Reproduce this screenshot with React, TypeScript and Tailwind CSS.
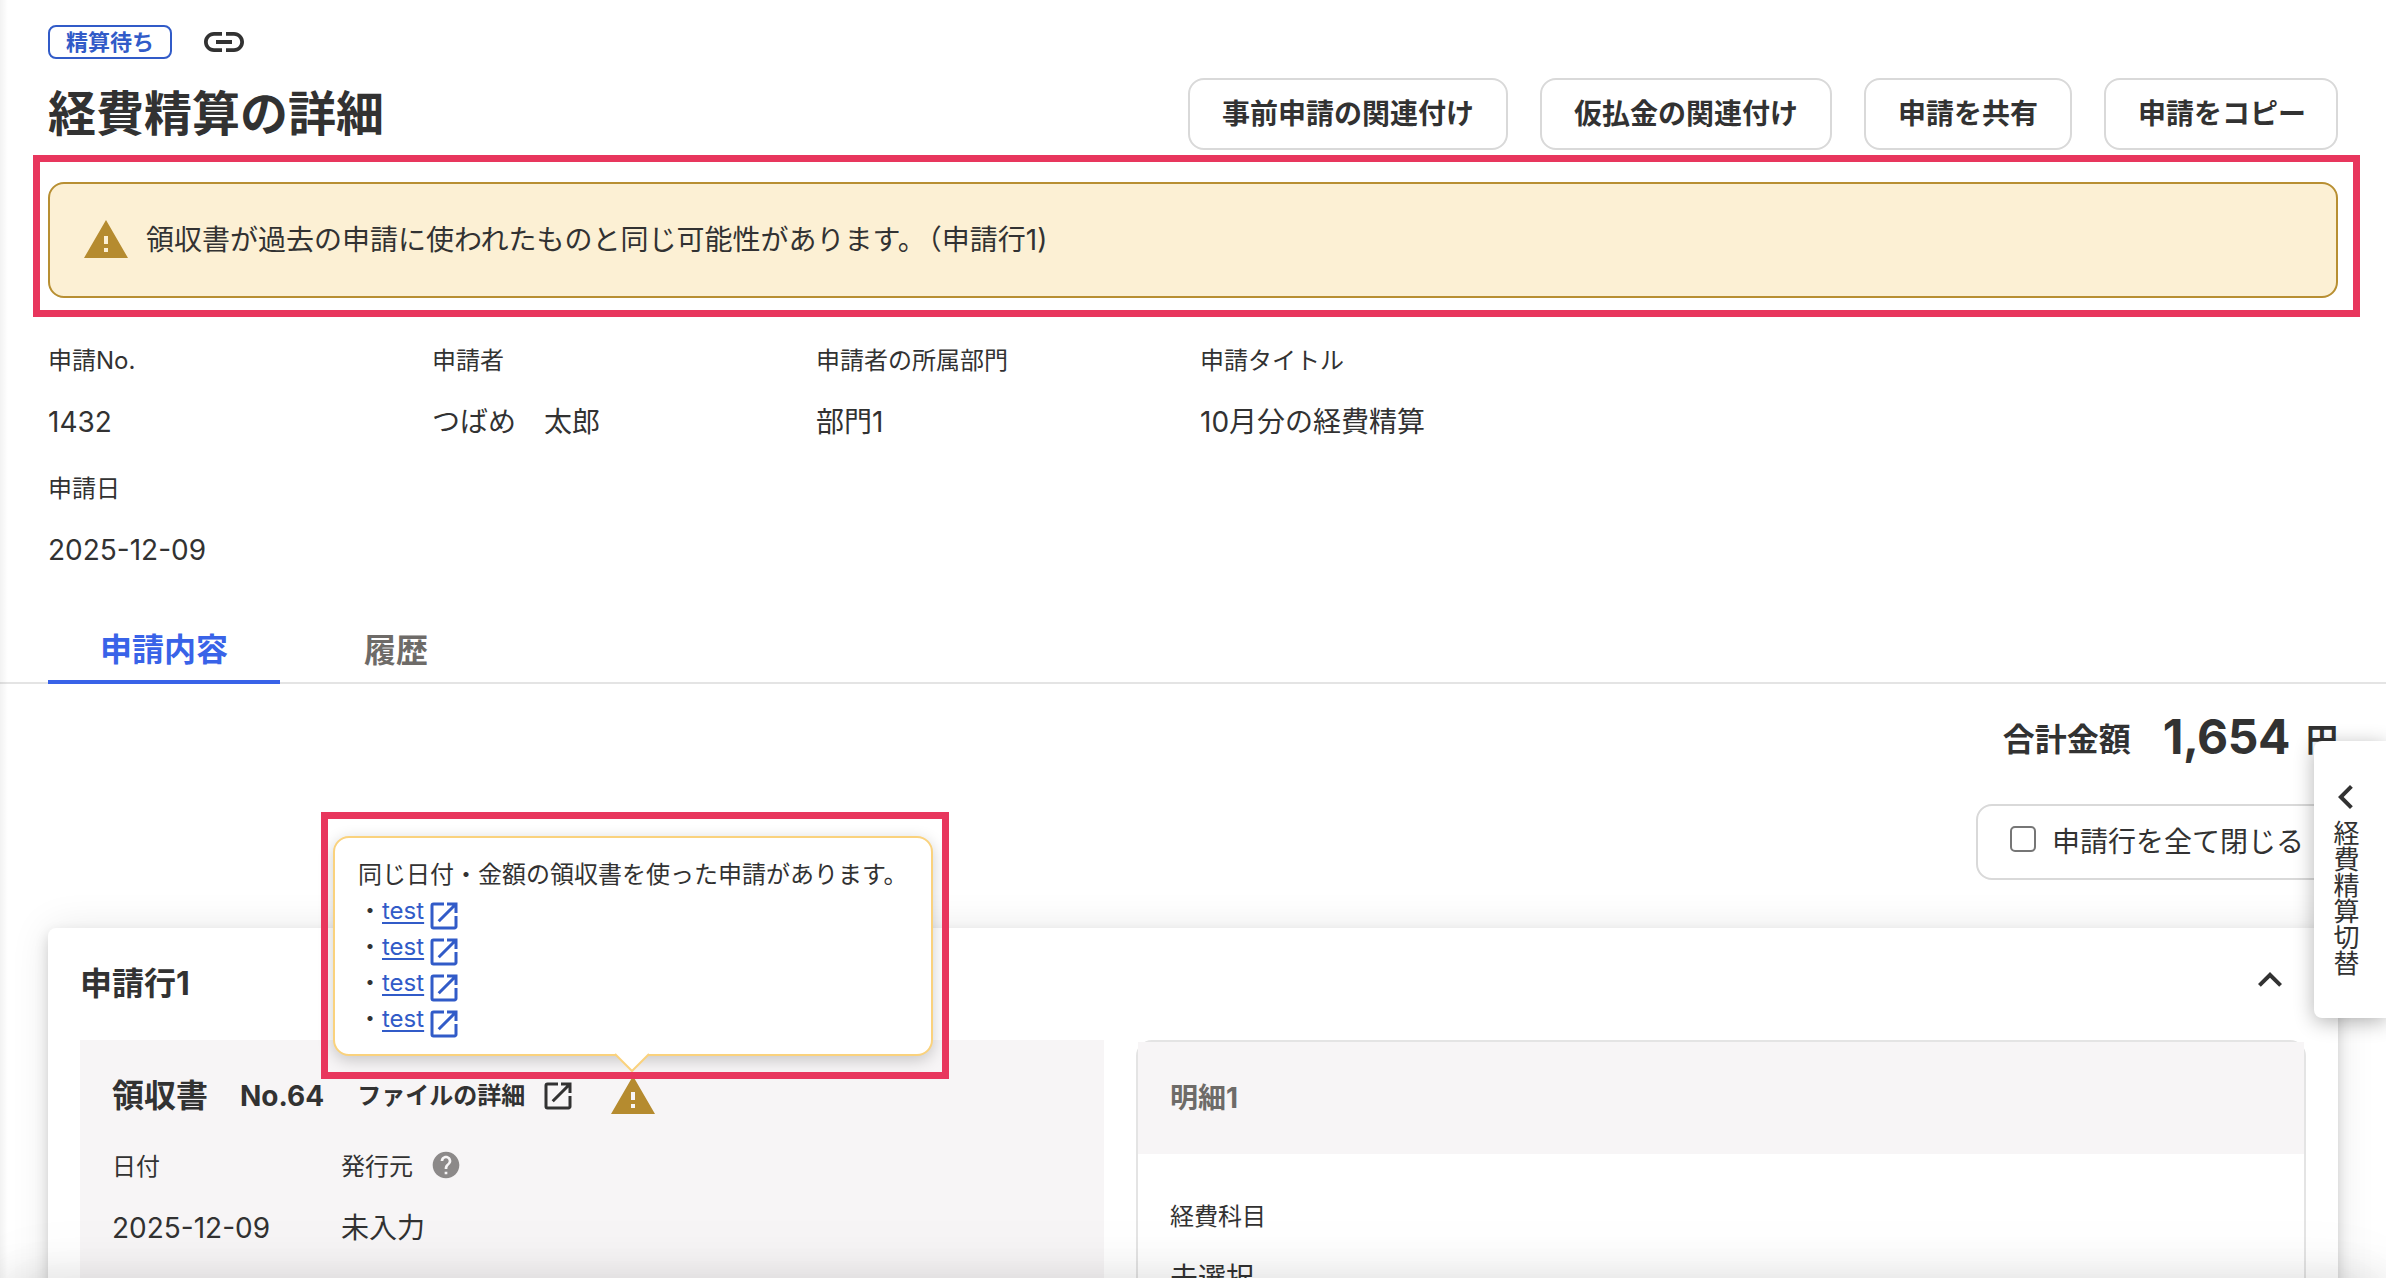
import type { ReactNode } from 'react'
import { MdChevronLeft, MdExpandLess, MdHelp, MdLink, MdOpenInNew, MdWarning } from 'react-icons/md'

const actions = ['事前申請の関連付け', '仮払金の関連付け', '申請を共有', '申請をコピー']

const fields = [
  { label: '申請No.', value: '1432' },
  { label: '申請者', value: 'つばめ　太郎' },
  { label: '申請者の所属部門', value: '部門1' },
  { label: '申請タイトル', value: '10月分の経費精算' },
  { label: '申請日', value: '2025-12-09' },
]

const duplicates = ['test', 'test', 'test', 'test']

function Field({ label, value }: { label: ReactNode; value: string }) {
  return (
    <div>
      <div className="flex items-center h-9 pt-px text-2xl">{label}</div>
      <div className="flex items-center h-[42px] mt-[23px] text-[28px]">{value}</div>
    </div>
  )
}

function DuplicateTooltip() {
  return (
    <div className="absolute left-[333px] top-[836px] w-[600px] h-[220px] rounded-2xl border-2 border-[#fad27d] bg-white pt-[19px] pl-[23px] text-2xl leading-9 shadow-[0_4px_16px_rgba(0,0,0,0.2)]">
      <p className="whitespace-nowrap">同じ日付・金額の領収書を使った申請があります。</p>
      <ul>
        {duplicates.map((name, i) => (
          <li key={i} className="flex h-9">
            <span>・</span>
            <a href="#" className="text-[#315bc8] underline decoration-2 underline-offset-[3px]">
              {name}
            </a>
            <MdOpenInNew className="size-9 mt-[5px] ml-0.5 text-[#315bc8] shrink-0" />
          </li>
        ))}
      </ul>
      <svg className="absolute left-[280px] top-[215px]" width="34" height="20" viewBox="0 0 34 20">
        <path d="M0 0H34V1L17 18L0 1Z" fill="#fff" />
        <path d="M0 1L17 18L34 1" fill="none" stroke="#fad27d" strokeWidth="2" />
      </svg>
    </div>
  )
}

function SideTab() {
  return (
    <button className="absolute right-0 top-[741px] w-[72px] h-[277px] rounded-l-lg bg-white flex flex-col items-center pt-8 shadow-[0_4px_20px_rgba(0,0,0,0.3)]">
      <MdChevronLeft className="size-12 -ml-2" />
      <span className="[writing-mode:vertical-rl] text-[26px] leading-[26px] -mt-px mr-3">経費精算切替</span>
    </button>
  )
}

export default function App() {
  return (
    <div className="relative w-[2386px] h-[1280px] overflow-hidden bg-white text-[#323232] font-['Inter','Noto_Sans_CJK_JP',sans-serif]">
      <header className="px-12 pt-[18px]">
        <div className="flex items-center gap-7 h-12">
          <span className="h-[34px] px-4 flex items-center rounded-lg border-2 border-[#315bc8] text-[#315bc8] text-[22px] font-bold">
            精算待ち
          </span>
          <MdLink className="size-12" />
        </div>
        <div className="flex items-center justify-between h-[72px] mt-3">
          <h1 className="text-5xl font-bold">経費精算の詳細</h1>
          <div className="flex gap-8">
            {actions.map((label) => (
              <button
                key={label}
                className="h-[72px] px-8 last:pr-[30px] rounded-2xl border-2 border-[#d9d9d9] text-[28px] font-bold"
              >
                {label}
              </button>
            ))}
          </div>
        </div>
        <div className="flex items-center h-[116px] mt-8 pl-8 gap-4 rounded-2xl border-2 border-[#b88f32] bg-[#fcf0d4]">
          <MdWarning className="size-12 text-[#b58b2f]" />
          <p className="text-[28px]">
            領収書が過去の申請に使われたものと同じ可能性があります。<span className="ml-0.5">（申請行1)</span>
          </p>
        </div>
      </header>

      <section className="grid grid-cols-[repeat(4,384px)] gap-y-[27px] px-12 mt-11">
        {fields.map((f) => (
          <Field key={f.label} label={f.label} value={f.value} />
        ))}
      </section>

      <nav className="flex gap-8 h-[72px] mt-[41px] px-12 border-b-2 border-[#e4e4e4] text-[32px] font-bold">
        <button className="h-[72px] px-[52px] pt-2 border-b-4 border-[#3963e8] text-[#3963e8]">申請内容</button>
        <button className="h-[72px] px-[52px] pt-1.5 text-[#6e6b68]">履歴</button>
      </nav>

      <div className="flex flex-col items-end px-12 pt-[22px]">
        <div className="flex items-baseline font-bold text-[32px] leading-[68px]">
          <span>合計金額</span>
          <span className="ml-8 text-5xl tracking-[-0.01em] translate-y-[3px]">1,654</span>
          <span className="ml-4">円</span>
        </div>
        <label className="flex items-center w-[362px] h-[76px] mt-[30px] pl-8 gap-4 rounded-2xl border-2 border-[#d9d9d9] text-[28px]">
          <input type="checkbox" className="appearance-none size-[26px] mb-1.5 rounded-[5px] border-2 border-[#767676]" />
          申請行を全て閉じる
        </label>
      </div>

      <section className="mx-12 mt-12 h-[500px] rounded-lg bg-white px-8 shadow-[0_0_40px_rgba(0,0,0,0.09),0_6px_14px_rgba(0,0,0,0.16)]">
        <div className="flex items-center justify-between h-28 pr-3">
          <h2 className="text-[32px] font-bold">申請行1</h2>
          <MdExpandLess className="size-12 mb-2" />
        </div>
        <div className="flex gap-8">
          <div className="w-[1024px] h-[400px] bg-[#f7f5f6] px-8 pt-8">
            <div className="flex items-center h-12 font-bold">
              <h3 className="text-[32px]">領収書</h3>
              <span className="ml-8 text-[28px]">No.64</span>
              <a className="ml-[33px] flex items-center gap-[15px] text-2xl">
                ファイルの詳細
                <MdOpenInNew className="size-9" />
              </a>
              <MdWarning className="size-12 ml-[33px] text-[#b58b2f]" />
            </div>
            <div className="grid grid-cols-[229px_auto] mt-7">
              <Field label="日付" value="2025-12-09" />
              <Field
                label={
                  <>
                    発行元
                    <MdHelp className="size-8 ml-[17px] mb-1 text-[#8c8989]" />
                  </>
                }
                value="未入力"
              />
            </div>
          </div>
          <div className="flex-1 h-[400px] rounded-2xl border-2 border-[#e4e4e4]">
            <h3 className="flex items-center h-28 px-8 bg-[#f7f5f6] text-[28px] font-bold text-[#6e6b68]">明細1</h3>
            <div className="px-8 pt-11">
              <Field label="経費科目" value="未選択" />
            </div>
          </div>
        </div>
      </section>

      {/* left edge shade cast by the menu, bottom edge by the footer bar */}
      <div className="absolute left-0 top-0 w-2 h-full bg-linear-to-r from-black/5 to-transparent" />
      <div className="absolute left-0 top-[1278px] w-full h-10 bg-white shadow-[0_0_40px_rgba(0,0,0,0.12),0_0_80px_rgba(0,0,0,0.06)]" />

      <SideTab />
      <DuplicateTooltip />

      {/* callout frames */}
      <div className="absolute left-[33px] top-[155px] w-[2327px] h-[162px] border-[7px] border-[#e8365d]" />
      <div className="absolute left-[321px] top-[812px] w-[628px] h-[267px] border-[7px] border-[#e8365d]" />
    </div>
  )
}
